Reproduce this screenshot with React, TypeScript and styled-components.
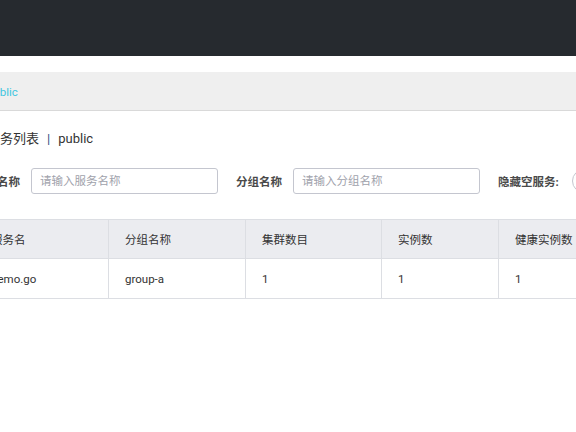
import React from 'react'
import styled, { createGlobalStyle } from 'styled-components'

const GlobalStyle = createGlobalStyle`
  html, body {
    margin: 0;
    padding: 0;
    background: #fff;
    font-family: Roboto, "Noto Sans CJK SC", sans-serif;
    color: #333;
  }
`

const Viewport = styled.div`
  width: 576px;
  height: 432px;
  overflow: hidden;
  position: relative;
`

const TopBar = styled.header`
  height: 56px;
  background: #262a2f;
`

/* the page is scrolled sideways in the reference, so the content starts left of the window */
const Canvas = styled.div`
  margin-left: -40px;
  width: 900px;
`

const NamespaceBar = styled.div`
  margin-top: 16px;
  box-sizing: border-box;
  height: 39px;
  padding: 2px 0 0 27px;
  background: #efefef;
  border-bottom: 1px solid #d9d9d9;
  display: flex;
  align-items: center;
`

const NamespaceLink = styled.a`
  font-size: 11.5px;
  color: #3ec6e0;
  text-decoration: none;
`

const Title = styled.div`
  margin-top: 18px;
  padding-left: 27px;
  height: 20px;
  line-height: 20px;
  font-size: 13px;
  color: #333;
  display: flex;
  align-items: center;
`

const Sep = styled.span`
  margin: 0 8px;
  color: #2f4f7f;
`

const FilterRow = styled.div`
  margin-top: 19px;
  padding-left: 14px;
  display: flex;
  align-items: center;
  height: 26px;
`

const Label = styled.label`
  font-size: 11.5px;
  font-weight: bold;
  color: #4a4a4a;
  margin-right: 11px;
  white-space: nowrap;
`

const TextInput = styled.input`
  box-sizing: border-box;
  width: 187px;
  height: 26px;
  border: 1px solid #c4c6cf;
  border-radius: 3px;
  padding: 0 8px;
  font-family: Roboto, "Noto Sans CJK SC", sans-serif;
  font-size: 11.5px;
  color: #333;
  margin-right: 18px;
  outline: none;
  &::placeholder {
    color: #a0a2ab;
  }
`

const Switch = styled.span`
  display: inline-block;
  box-sizing: border-box;
  width: 44px;
  height: 24px;
  border: 1px solid #c4c6cf;
  border-radius: 12px;
  background: #fff;
  margin-left: 2px;
`

const Table = styled.table`
  margin-top: 25px;
  margin-left: 14px;
  border-collapse: collapse;
  table-layout: fixed;
  width: 800px;
  font-size: 11.5px;
`

const Th = styled.th<{ $w: number }>`
  box-sizing: border-box;
  width: ${(p) => p.$w}px;
  height: 39px;
  padding: 0 16px;
  background: #ebecf0;
  border: 1px solid #dcdee3;
  text-align: left;
  font-weight: normal;
  color: #333;
`

const Td = styled.td`
  height: 39px;
  padding: 0 16px;
  border: 1px solid #dcdee3;
  color: #333;
`

const columns = [
  { title: '服务名', w: 134 },
  { title: '分组名称', w: 137 },
  { title: '集群数目', w: 136 },
  { title: '实例数', w: 117 },
  { title: '健康实例数', w: 120 },
  { title: '触发保护阈值', w: 156 },
]

const rows = [['demo.go', 'group-a', '1', '1', '1', 'false']]

export default function App() {
  return (
    <Viewport>
      <GlobalStyle />
      <TopBar />
      <Canvas>
        <NamespaceBar>
          <NamespaceLink href="#">public</NamespaceLink>
        </NamespaceBar>
        <Title>
          服务列表<Sep>|</Sep>public
        </Title>
        <FilterRow>
          <Label>服务名称</Label>
          <TextInput placeholder="请输入服务名称" />
          <Label>分组名称</Label>
          <TextInput placeholder="请输入分组名称" />
          <Label>隐藏空服务:</Label>
          <Switch />
        </FilterRow>
        <Table>
          <thead>
            <tr>
              {columns.map((c) => (
                <Th key={c.title} $w={c.w}>
                  {c.title}
                </Th>
              ))}
            </tr>
          </thead>
          <tbody>
            {rows.map((r, i) => (
              <tr key={i}>
                {r.map((v, j) => (
                  <Td key={j}>{v}</Td>
                ))}
              </tr>
            ))}
          </tbody>
        </Table>
      </Canvas>
    </Viewport>
  )
}
